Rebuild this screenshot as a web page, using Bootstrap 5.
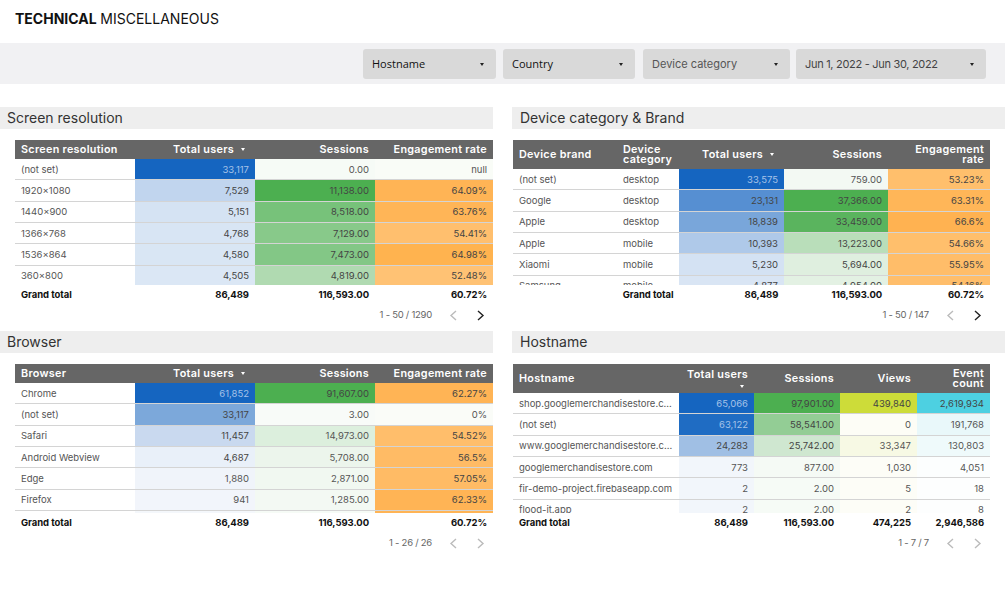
<!DOCTYPE html>
<html lang="en"><head><meta charset="utf-8"><title>Technical Miscellaneous</title>
<link href="https://cdn.jsdelivr.net/npm/bootstrap@5.3.0/dist/css/bootstrap.min.css" rel="stylesheet">
<style>
body{font-family:Inter,"Liberation Sans",sans-serif;background:#fff;color:#444;width:1005px;overflow:hidden}
.page-title{height:43px;padding:10px 15px 0;font-size:14px;line-height:18px;color:#111;margin:0}
.page-title b{font-weight:700}.page-title span{font-weight:400}
.filter-bar{height:41px;background:#f1f1f3;padding-right:19px;gap:7px;margin-bottom:23px}
.filter-btn{height:30px;background:#d9d9d9;border:0;border-radius:3px;font-size:11px;line-height:30px;padding:1px 12px 0 9px;color:#333;text-align:left;display:flex;justify-content:space-between;align-items:center}
.filter-btn:hover{background:#d9d9d9;color:#333}
.filter-btn::after{border-top:3px solid #222;border-left:2.5px solid transparent;border-right:2.5px solid transparent;border-bottom:0;margin:0}
.fb-host{width:133px;color:#111;font-family:"Open Sans",sans-serif}
.fb-country{width:132px;color:#111;font-family:"Open Sans",sans-serif}
.fb-device{width:147px;color:#555;margin-left:1px}
.fb-date{width:190px;color:#444;margin-left:-1px;letter-spacing:-.3px}
.report{display:grid;grid-template-columns:493px 493px;column-gap:19px;row-gap:0}
.panel{height:224px}
.panel-head{height:22px;background:#eee;font-size:14px;line-height:22px;padding-left:7px;color:#333;margin-bottom:11px}
.head-right{padding-left:8px}
.tbl-left{margin-left:15px}.tbl-right{margin:0 15px 0 1px}
.clip{height:145px;overflow:hidden}
.clip-tall{height:149px}
.dt{table-layout:fixed;width:100%;margin:0;font-size:9.5px;--bs-table-bg:transparent;border-collapse:separate;border-spacing:0}
.dt>*>tr>*{padding:1px 6px 0;border:0;vertical-align:middle;white-space:nowrap;overflow:hidden;box-shadow:none}
.dt thead th{background:#666;color:#fff;font-weight:600;font-size:10.8px;line-height:10.5px;height:19px;letter-spacing:.3px}
.dt thead th.twoline{height:29px;white-space:normal}
.dt tbody td{height:21.33px;color:#555;border-bottom:1px solid #d4d4d4}
.dt tbody td.dark{color:#a6c3e8}
.dt tbody td.num{color:#444}
.sort-tri{display:inline-block;width:0;height:0;border-top:3px solid #fff;border-left:2.5px solid transparent;border-right:2.5px solid transparent;margin:0 4px 0 7px;vertical-align:2px}
.sort-under{display:block;margin:4px 4px 0 auto}
.grand{height:20px}
.grand td{padding:0 6px;font-weight:700;font-size:9.5px;color:#111;white-space:nowrap;border:0;letter-spacing:-.05px}
.pager{height:20px;font-size:9.5px;color:#666;padding-right:8px}
.pager svg{display:block}
.pager-text{margin-right:17px;letter-spacing:-.25px}
.pager-gap{margin-left:18px}
</style></head><body>
<h1 class="page-title"><b>TECHNICAL</b> <span>MISCELLANEOUS</span></h1>
<div class="filter-bar d-flex justify-content-end align-items-center">
<button class="btn filter-btn dropdown-toggle fb-host" type="button">Hostname</button>
<button class="btn filter-btn dropdown-toggle fb-country" type="button">Country</button>
<button class="btn filter-btn dropdown-toggle fb-device" type="button">Device category</button>
<button class="btn filter-btn dropdown-toggle fb-date" type="button">Jun 1, 2022 - Jun 30, 2022</button>
</div>
<div class="report">

<section class="panel">
<div class="panel-head">Screen resolution</div>
<div class="tbl-left">
<div class="clip"><table class="table dt"><colgroup><col style="width:120px"><col style="width:120px"><col style="width:120px"><col style="width:118px"></colgroup>
<thead><tr><th>Screen resolution</th><th class="text-end">Total users<span class="sort-tri"></span></th><th class="text-end">Sessions</th><th class="text-end">Engagement rate</th></tr></thead>
<tbody>
<tr><td>(not set)</td><td class="text-end dark" style="background:#1565c0">33,117</td><td class="text-end" style="background:#f6fbf6">0.00</td><td class="text-end" style="background:#f9fcf7">null</td></tr>
<tr><td>1920x1080</td><td class="text-end num" style="background:#c1d5ee">7,529</td><td class="text-end num" style="background:#4caf50">11,138.00</td><td class="text-end num" style="background:#ffb455">64.09%</td></tr>
<tr><td>1440x900</td><td class="text-end num" style="background:#d5e3f3">5,151</td><td class="text-end num" style="background:#77c27a">8,518.00</td><td class="text-end num" style="background:#ffb557">63.76%</td></tr>
<tr><td>1366x768</td><td class="text-end num" style="background:#d8e5f4">4,768</td><td class="text-end num" style="background:#88c98a">7,129.00</td><td class="text-end num" style="background:#ffbf6e">54.41%</td></tr>
<tr><td>1536x864</td><td class="text-end num" style="background:#d9e6f4">4,580</td><td class="text-end num" style="background:#83c786">7,473.00</td><td class="text-end num" style="background:#ffb34f">64.98%</td></tr>
<tr><td>360x800</td><td class="text-end num" style="background:#dbe7f5">4,505</td><td class="text-end num" style="background:#b0dab1">4,819.00</td><td class="text-end num" style="background:#ffc274">52.48%</td></tr>
</tbody></table></div>
<table class="grand w-100"><colgroup><col style="width:120px"><col style="width:120px"><col style="width:120px"><col style="width:118px"></colgroup><tr><td>Grand total</td><td class="text-end">86,489</td><td class="text-end">116,593.00</td><td class="text-end">60.72%</td></tr></table>
<div class="pager d-flex justify-content-end align-items-center"><span class="pager-text">1 - 50 / 1290</span><svg width="9" height="11" viewBox="0 0 9 11"><path d="M7 1 2 5.5 7 10" fill="none" stroke="#bbb" stroke-width="1.4"/></svg><svg class="pager-gap" width="9" height="11" viewBox="0 0 9 11"><path d="M2 1 7 5.5 2 10" fill="none" stroke="#222" stroke-width="1.4"/></svg></div>
</div></section>

<section class="panel">
<div class="panel-head head-right">Device category &amp; Brand</div>
<div class="tbl-right">
<div class="clip"><table class="table dt"><colgroup><col style="width:104px"><col style="width:62px"><col style="width:105px"><col style="width:104px"><col style="width:102px"></colgroup>
<thead><tr><th class="twoline">Device brand</th><th class="twoline">Device category</th><th class="text-end twoline">Total users<span class="sort-tri"></span></th><th class="text-end twoline">Sessions</th><th class="text-end twoline">Engagement rate</th></tr></thead>
<tbody>
<tr><td>(not set)</td><td>desktop</td><td class="text-end dark" style="background:#1565c0">33,575</td><td class="text-end" style="background:#f3f9f3">759.00</td><td class="text-end num" style="background:#ffbf6c">53.23%</td></tr>
<tr><td>Google</td><td>desktop</td><td class="text-end num" style="background:#568fd2">23,131</td><td class="text-end num" style="background:#4caf50">37,366.00</td><td class="text-end num" style="background:#ffb658">63.31%</td></tr>
<tr><td>Apple</td><td>desktop</td><td class="text-end num" style="background:#79a6da">18,839</td><td class="text-end num" style="background:#5ab45e">33,459.00</td><td class="text-end num" style="background:#ffb251">66.6%</td></tr>
<tr><td>Apple</td><td>mobile</td><td class="text-end num" style="background:#afc9e9">10,393</td><td class="text-end num" style="background:#b9deba">13,223.00</td><td class="text-end num" style="background:#ffbf6c">54.66%</td></tr>
<tr><td>Xiaomi</td><td>mobile</td><td class="text-end num" style="background:#d4e2f3">5,230</td><td class="text-end num" style="background:#dfefdf">5,694.00</td><td class="text-end num" style="background:#ffbd69">55.95%</td></tr>
<tr><td>Samsung</td><td>mobile</td><td class="text-end num" style="background:#d9e5f4">4,877</td><td class="text-end num" style="background:#e3f1e3">4,954.00</td><td class="text-end num" style="background:#ffbe6b">54.16%</td></tr>
</tbody></table></div>
<table class="grand w-100"><colgroup><col style="width:104px"><col style="width:62px"><col style="width:105px"><col style="width:104px"><col style="width:102px"></colgroup><tr><td></td><td>Grand total</td><td class="text-end">86,489</td><td class="text-end">116,593.00</td><td class="text-end">60.72%</td></tr></table>
<div class="pager d-flex justify-content-end align-items-center"><span class="pager-text">1 - 50 / 147</span><svg width="9" height="11" viewBox="0 0 9 11"><path d="M7 1 2 5.5 7 10" fill="none" stroke="#bbb" stroke-width="1.4"/></svg><svg class="pager-gap" width="9" height="11" viewBox="0 0 9 11"><path d="M2 1 7 5.5 2 10" fill="none" stroke="#222" stroke-width="1.4"/></svg></div>
</div></section>

<section class="panel">
<div class="panel-head">Browser</div>
<div class="tbl-left">
<div class="clip clip-tall"><table class="table dt"><colgroup><col style="width:120px"><col style="width:120px"><col style="width:120px"><col style="width:118px"></colgroup>
<thead><tr><th>Browser</th><th class="text-end">Total users<span class="sort-tri"></span></th><th class="text-end">Sessions</th><th class="text-end">Engagement rate</th></tr></thead>
<tbody>
<tr><td>Chrome</td><td class="text-end dark" style="background:#1565c0">61,852</td><td class="text-end num" style="background:#4caf50">91,607.00</td><td class="text-end num" style="background:#ffb455">62.27%</td></tr>
<tr><td>(not set)</td><td class="text-end num" style="background:#7ca8da">33,117</td><td class="text-end" style="background:#f8fbf8">3.00</td><td class="text-end" style="background:#fafcf8">0%</td></tr>
<tr><td>Safari</td><td class="text-end num" style="background:#c9d9ef">11,457</td><td class="text-end" style="background:#dcefdd">14,973.00</td><td class="text-end num" style="background:#ffbe6b">54.52%</td></tr>
<tr><td>Android Webview</td><td class="text-end num" style="background:#e9f0f9">4,687</td><td class="text-end" style="background:#ecf5ec">5,708.00</td><td class="text-end num" style="background:#ffbb65">56.5%</td></tr>
<tr><td>Edge</td><td class="text-end" style="background:#f0f4fa">1,880</td><td class="text-end" style="background:#f1f8f1">2,871.00</td><td class="text-end num" style="background:#ffbb65">57.05%</td></tr>
<tr><td>Firefox</td><td class="text-end" style="background:#f2f5fb">941</td><td class="text-end" style="background:#f3f9f3">1,285.00</td><td class="text-end num" style="background:#ffb455">62.33%</td></tr>
<tr><td></td><td style="background:#f4f7fb"></td><td style="background:#f6fbf6"></td><td style="background:#ffb455"></td></tr>
</tbody></table></div>
<table class="grand w-100"><colgroup><col style="width:120px"><col style="width:120px"><col style="width:120px"><col style="width:118px"></colgroup><tr><td>Grand total</td><td class="text-end">86,489</td><td class="text-end">116,593.00</td><td class="text-end">60.72%</td></tr></table>
<div class="pager d-flex justify-content-end align-items-center"><span class="pager-text">1 - 26 / 26</span><svg width="9" height="11" viewBox="0 0 9 11"><path d="M7 1 2 5.5 7 10" fill="none" stroke="#bbb" stroke-width="1.4"/></svg><svg class="pager-gap" width="9" height="11" viewBox="0 0 9 11"><path d="M2 1 7 5.5 2 10" fill="none" stroke="#bbb" stroke-width="1.4"/></svg></div>
</div></section>

<section class="panel">
<div class="panel-head head-right">Hostname</div>
<div class="tbl-right">
<div class="clip clip-tall"><table class="table dt"><colgroup><col style="width:166px"><col style="width:75px"><col style="width:86px"><col style="width:77px"><col style="width:73px"></colgroup>
<thead><tr><th class="twoline">Hostname</th><th class="text-end twoline">Total users<span class="sort-tri sort-under"></span></th><th class="text-end twoline">Sessions</th><th class="text-end twoline">Views</th><th class="text-end twoline">Event count</th></tr></thead>
<tbody>
<tr><td class="text-truncate">shop.googlemerchandisestore.c...</td><td class="text-end dark" style="background:#1565c0">65,066</td><td class="text-end num" style="background:#4caf50">97,901.00</td><td class="text-end num" style="background:#cddc39">439,840</td><td class="text-end num" style="background:#4dd0e1">2,619,934</td></tr>
<tr><td>(not set)</td><td class="text-end dark" style="background:#1f6cc3">63,122</td><td class="text-end num" style="background:#93cd95">58,541.00</td><td class="text-end" style="background:#fdfdf6">0</td><td class="text-end" style="background:#e9f8fa">191,768</td></tr>
<tr><td class="text-truncate">www.googlemerchandisestore.c...</td><td class="text-end num" style="background:#a0bfe4">24,283</td><td class="text-end num" style="background:#cfe7d0">25,742.00</td><td class="text-end" style="background:#f7f9e4">33,347</td><td class="text-end" style="background:#effafb">130,803</td></tr>
<tr><td>googlemerchandisestore.com</td><td class="text-end" style="background:#f2f6fb">773</td><td class="text-end" style="background:#f5faf5">877.00</td><td class="text-end" style="background:#fdfdf7">1,030</td><td class="text-end" style="background:#fcfefe">4,051</td></tr>
<tr><td>fir-demo-project.firebaseapp.com</td><td class="text-end" style="background:#f2f6fb">2</td><td class="text-end" style="background:#f6fbf6">2.00</td><td class="text-end" style="background:#fdfdf7">5</td><td class="text-end" style="background:#fdfefe">18</td></tr>
<tr><td>flood-it.app</td><td class="text-end" style="background:#f2f6fb">2</td><td class="text-end" style="background:#f6fbf6">2.00</td><td class="text-end" style="background:#fdfdf7">2</td><td class="text-end" style="background:#fdfefe">8</td></tr>
</tbody></table></div>
<table class="grand w-100"><colgroup><col style="width:166px"><col style="width:75px"><col style="width:86px"><col style="width:77px"><col style="width:73px"></colgroup><tr><td>Grand total</td><td class="text-end">86,489</td><td class="text-end">116,593.00</td><td class="text-end">474,225</td><td class="text-end">2,946,586</td></tr></table>
<div class="pager d-flex justify-content-end align-items-center"><span class="pager-text">1 - 7 / 7</span><svg width="9" height="11" viewBox="0 0 9 11"><path d="M7 1 2 5.5 7 10" fill="none" stroke="#bbb" stroke-width="1.4"/></svg><svg class="pager-gap" width="9" height="11" viewBox="0 0 9 11"><path d="M2 1 7 5.5 2 10" fill="none" stroke="#bbb" stroke-width="1.4"/></svg></div>
</div></section>
</div>
<script src="https://cdn.jsdelivr.net/npm/bootstrap@5.3.0/dist/js/bootstrap.bundle.min.js"></script>
</body></html>
